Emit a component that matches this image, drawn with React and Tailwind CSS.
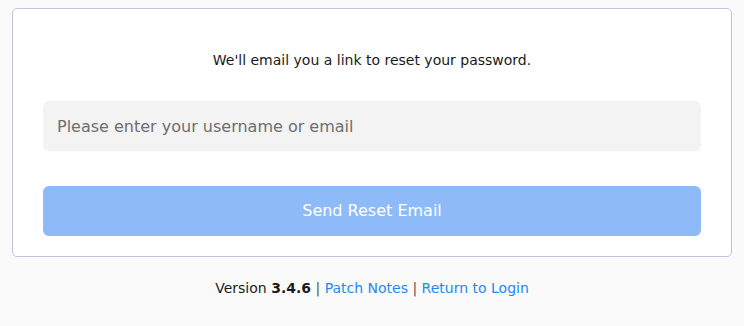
import React from "react";

const App = () => {
  return (
    <div
      className="min-h-[326px] w-full bg-[#fafafa] px-3 pt-2"
      style={{ fontFamily: '"DejaVu Sans", sans-serif' }}
    >
      {/* card */}
      <div className="rounded-[5px] border border-[#c5c1dd] bg-white px-[30px] pt-[41px] pb-[20px]">
        <p className="text-center text-[14px] leading-[20px] text-[#1a1a1a]">
          We'll email you a link to reset your password.
        </p>

        <input
          type="text"
          placeholder="Please enter your username or email"
          className="mt-[31px] block h-[50px] w-full rounded-[6px] bg-[#f3f3f3] px-[14px] text-[16px] text-[#333] outline-none placeholder:text-[#6e6e6e]"
        />

        <button
          type="button"
          className="mt-[35px] flex h-[50px] w-full items-center justify-center rounded-[6px] bg-[#8ebbf8] text-[16px] text-white"
        >
          Send Reset Email
        </button>
      </div>

      {/* footer */}
      <div className="mt-[21px] text-center text-[14px] leading-[20px] text-[#1a1a1a]">
        Version <span className="font-bold">3.4.6</span>{" "}
        <span className="text-[#555]">|</span>{" "}
        <a href="#" className="text-[#1e88f5]">
          Patch Notes
        </a>{" "}
        <span className="text-[#555]">|</span>{" "}
        <a href="#" className="text-[#1e88f5]">
          Return to Login
        </a>
      </div>
    </div>
  );
};

export default App;
